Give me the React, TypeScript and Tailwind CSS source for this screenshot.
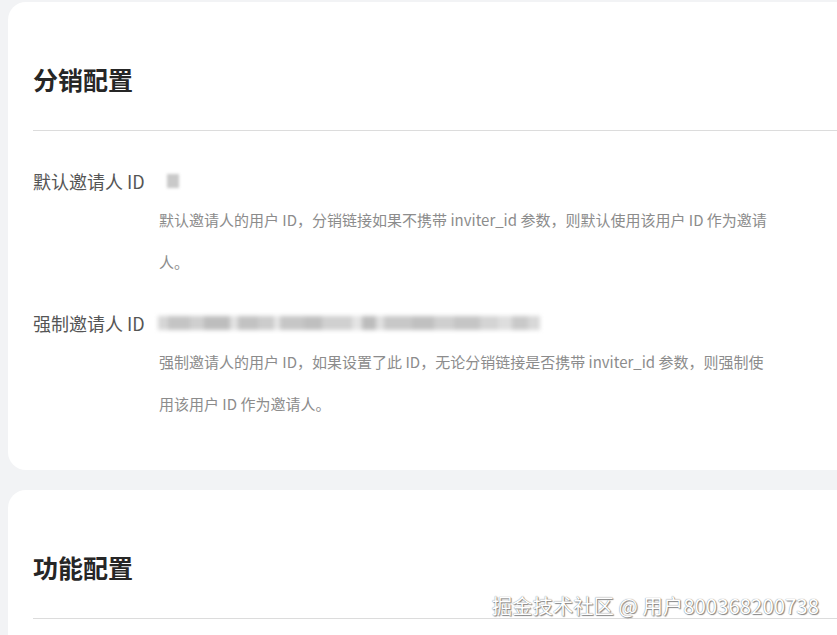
const font = { fontFamily: '"Noto Sans CJK SC", "Noto Sans", sans-serif' };

type Field = {
    label: string;
    value: React.ReactNode;
    desc: string;
};

// blurred (masked) value, drawn as soft gray blocks
const mosaic = [
    [10, '#d6d6d6'], [22, '#c4c4c4'], [14, '#cfcfcf'], [26, '#bdbdbd'], [8, '#e2e2e2'],
    [20, '#c2c2c2'], [16, '#cccccc'], [6, '#e6e6e6'], [24, '#c6c6c6'], [18, '#bfbfbf'],
    [30, '#d0d0d0'], [10, '#e4e4e4'], [14, '#bcbcbc'], [8, '#e0e0e0'], [28, '#c8c8c8'],
    [22, '#c0c0c0'], [20, '#cfcfcf'], [26, '#c5c5c5'], [18, '#d4d4d4'], [14, '#dedede'],
    [16, '#c9c9c9'], [12, '#d8d8d8'],
] as const;

const fields: Field[] = [
    {
        label: '默认邀请人 ID',
        value: (
            <span className="ml-[7px] flex h-[16px] w-[14px] items-center blur-[1.5px]">
                <span className="h-[14px] w-[12px] bg-[#c9c9c9]" />
            </span>
        ),
        desc: '默认邀请人的用户 ID，分销链接如果不携带 inviter_id 参数，则默认使用该用户 ID 作为邀请人。',
    },
    {
        label: '强制邀请人 ID',
        value: (
            <span className="-ml-[2px] flex h-[14px] w-[382px] items-stretch overflow-hidden blur-[2px]">
                {mosaic.map(([w, c], i) => (
                    <span key={i} className="h-full" style={{ width: w, background: c }} />
                ))}
            </span>
        ),
        desc: '强制邀请人的用户 ID，如果设置了此 ID，无论分销链接是否携带 inviter_id 参数，则强制使用该用户 ID 作为邀请人。',
    },
];

function Card({ title, children }: { title: string; children?: React.ReactNode }) {
    return (
        <section className="ml-[8px] rounded-l-[18px] bg-white pl-[25px] pt-[59px]">
            <h2 className="text-[25px] leading-[36px] font-bold text-[#262626]">{title}</h2>
            <hr className="mt-[33px] border-t border-[#dcdcdc]" />
            {children}
        </section>
    );
}

export default function App() {
    return (
        <div className="relative h-[635px] w-[837px] overflow-hidden bg-[#f2f3f5] pt-[2px]" style={font}>
            <Card title="分销配置">
                <div className="pb-[45px] pt-[2px]">
                    {fields.map((f, i) => (
                        <div key={i} className={i === 0 ? 'mt-[32px]' : 'mt-[24px]'}>
                            <div className="flex h-[32px] items-center">
                                <span className="w-[127px] shrink-0 text-[18px] text-[#555555]">{f.label}</span>
                                {f.value}
                            </div>
                            <p className="ml-[126px] mt-[2px] w-[612px] text-[15px] leading-[42px] text-[#8c8c8c]">
                                {f.desc}
                            </p>
                        </div>
                    ))}
                </div>
            </Card>

            <div className="mt-[20px]">
                <Card title="功能配置">
                    <div className="h-[40px]" />
                </Card>
            </div>

            {/* watermark */}
            <div className="absolute right-[18px] top-[592px] text-[20.4px] leading-[26px] text-white [text-shadow:0_0_1px_#666,1px_1px_1px_#888]">
                掘金技术社区 @ 用户800368200738
            </div>
        </div>
    );
}
